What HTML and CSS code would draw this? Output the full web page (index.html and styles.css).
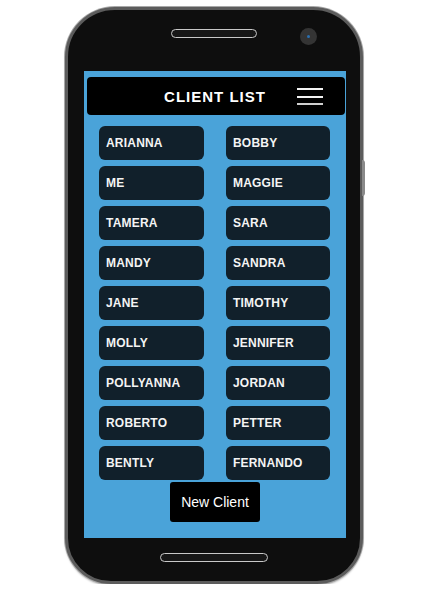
FILE: index.html
```html
<!DOCTYPE html>
<html>
<head>
<meta charset="utf-8">
<link rel="stylesheet" href="styles.css">
</head>
<body>
<div class="phone">
  <div class="side-btn"></div>
  <div class="top">
    <div class="speaker"></div>
    <div class="camera"><div class="lens"></div></div>
  </div>
  <div class="screen">
    <div class="header">
      <div class="title">CLIENT LIST</div>
      <div class="menu"><span></span><span></span><span class="last"></span></div>
    </div>
    <div class="grid">
      <div class="client">ARIANNA</div><div class="client">BOBBY</div>
      <div class="client">ME</div><div class="client">MAGGIE</div>
      <div class="client">TAMERA</div><div class="client">SARA</div>
      <div class="client">MANDY</div><div class="client">SANDRA</div>
      <div class="client">JANE</div><div class="client">TIMOTHY</div>
      <div class="client">MOLLY</div><div class="client">JENNIFER</div>
      <div class="client">POLLYANNA</div><div class="client">JORDAN</div>
      <div class="client">ROBERTO</div><div class="client">PETTER</div>
      <div class="client">BENTLY</div><div class="client">FERNANDO</div>
    </div>
    <div class="new-wrap"><div class="new-btn">New Client</div></div>
  </div>
  <div class="bottom"><div class="home"></div></div>
</div>
</body>
</html>
```
FILE: styles.css
```css
html, body {
  margin: 0;
  padding: 0;
  background: #ffffff;
}
body {
  padding: 7px 0 0 65px;
  font-family: "Liberation Sans", Arial, sans-serif;
}
.phone {
  position: relative;
  box-sizing: border-box;
  width: 298px;
  height: 577px;
  border-radius: 50px 50px 46px 46px;
  background: #0e0e0e;
  border: 3px solid #5c5c5c;
  box-shadow: 0 0 0 1px #a8a8a8, 0 2px 2px #bdbdbd;
  display: flex;
  flex-direction: column;
  align-items: flex-start;
}
.side-btn {
  position: absolute;
  right: -5px;
  top: 150px;
  width: 3px;
  height: 36px;
  border-radius: 0 3px 3px 0;
  background: #8a8a8a;
}
.top {
  position: relative;
  width: 100%;
  height: 61px;
}
.speaker {
  position: absolute;
  left: 103px;
  top: 19px;
  box-sizing: border-box;
  width: 86px;
  height: 9px;
  border: 1.5px solid #c8c8c8;
  border-radius: 5px;
  background: #161616;
}
.camera {
  position: absolute;
  left: 232px;
  top: 18px;
  width: 17px;
  height: 17px;
  border-radius: 50%;
  background: #343434;
  display: flex;
  align-items: center;
  justify-content: center;
}
.lens {
  width: 3px;
  height: 3px;
  border-radius: 50%;
  background: #2a6fb0;
}
.screen {
  box-sizing: border-box;
  margin-left: 16px;
  width: 262px;
  height: 467px;
  background: #4aa3d9;
  padding: 6px 1px 0 3px;
  display: flex;
  flex-direction: column;
}
.header {
  position: relative;
  height: 38px;
  background: #000;
  border-radius: 4px;
  display: flex;
  align-items: center;
  justify-content: center;
}
.title {
  color: #fff;
  font-weight: bold;
  font-size: 15px;
  letter-spacing: 1px;
  margin-right: 2px;
}
.menu {
  position: absolute;
  right: 22px;
  top: 11px;
  width: 26px;
  display: flex;
  flex-direction: column;
  gap: 5.5px;
}
.menu span {
  display: block;
  height: 2px;
  background: #f2f2f2;
}
.menu span.last {
  background: #cfcfcf;
}
.grid {
  margin-top: 11px;
  padding-left: 12px;
  display: grid;
  grid-template-columns: 105px 104px;
  grid-auto-rows: 34px;
  column-gap: 22px;
  row-gap: 6px;
}
.client {
  background: #11202b;
  border-radius: 6px;
  color: #f4f4f4;
  font-weight: bold;
  font-size: 12px;
  letter-spacing: 0.2px;
  padding-left: 7px;
  padding-bottom: 1px;
  display: flex;
  align-items: center;
}
.new-wrap {
  display: flex;
  justify-content: center;
  margin-top: 2px;
  padding-right: 2px;
}
.new-btn {
  width: 90px;
  height: 40px;
  background: #000;
  border-radius: 3px;
  color: #fff;
  font-size: 14px;
  display: flex;
  align-items: center;
  justify-content: center;
}
.bottom {
  width: 100%;
  display: flex;
  justify-content: center;
  padding-top: 15px;
}
.home {
  box-sizing: border-box;
  width: 108px;
  height: 9px;
  border: 1.5px solid #c8c8c8;
  border-radius: 5px;
  background: #161616;
}
```
